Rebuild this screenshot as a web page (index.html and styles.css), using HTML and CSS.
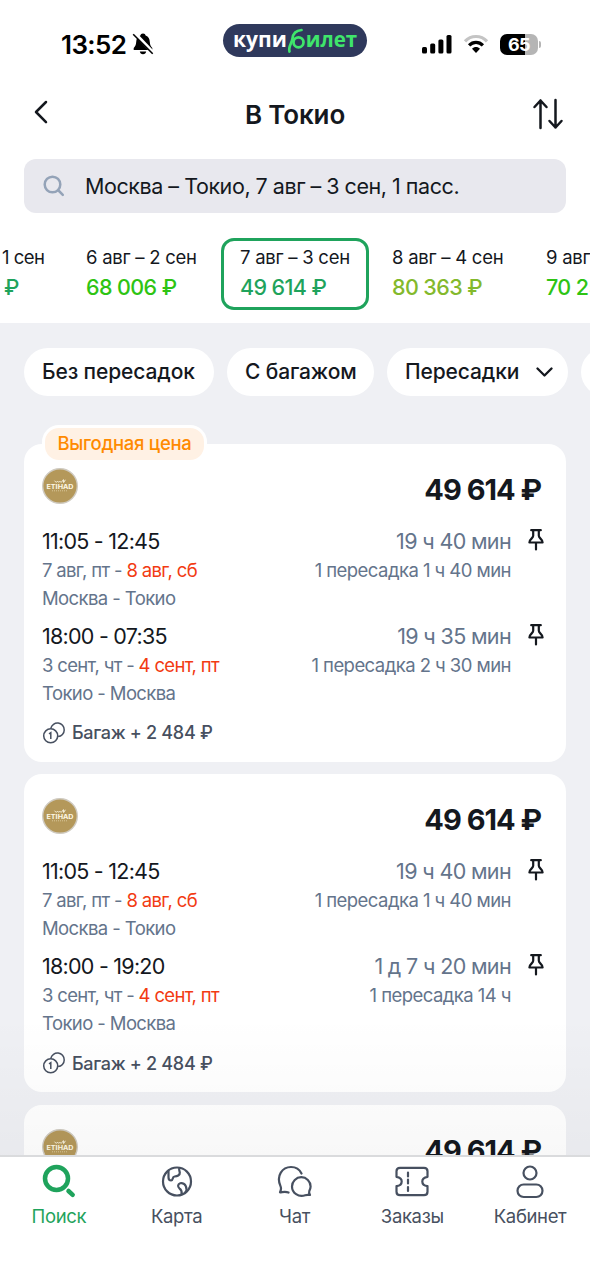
FILE: index.html
```html
<!DOCTYPE html>
<html lang="ru">
<head>
<meta charset="utf-8">
<title>В Токио</title>
<link rel="stylesheet" href="styles.css">
</head>
<body>
<svg class="defs" width="0" height="0">
  <symbol id="pin" viewBox="0 0 18 24"><path d="M4.200 2.200h9.600M6.200 2.500v5.300c0 2.600-3.800 3.200-3.800 6.700h13.200c0-3.500-3.800-4.100-3.800-6.700V2.500M9 14.500v7"/></symbol>
  <symbol id="coins" viewBox="0 0 24 24"><circle cx="8.700" cy="14.800" r="7"/><path d="M8.800 7.300a6.800 6.800 0 1 1 7.300 8.300M7 12.900l1.800-1.200v6.300"/></symbol>
  <symbol id="airline" viewBox="0 0 36 36"><circle cx="18" cy="18" r="17.300" fill="#b4985a" stroke="#cfcac0" stroke-width="1.400"/><path d="M12.500 12.700c1 1.600 2.200 2 3.200.6.500 1.200 1.500 1.200 2.200 0 .5 1.400 2 1 2.500-.2l1-1.500.2 3 1.800-2.800" fill="none" stroke="#f6efd9" stroke-width="1"/><text x="18" y="20.500" text-anchor="middle" textLength="27" lengthAdjust="spacingAndGlyphs">ETIHAD</text><path d="M10 22.800h16" stroke="#e0d2a8" stroke-width=".8" stroke-dasharray="1 1"/></symbol>
</svg>
<div class="app">
  <header class="top">
    <div class="status">
      <div class="clock"><span>13:52</span>
        <svg width="22" height="24" viewBox="0 0 22 24"><path d="M11 1.500c1.600 0 2.300.8 2.600 2 3 1.100 4 3.500 4.200 6.500.2 3.300 1 4.300 2.500 6v1.900H1.700V16c1.500-1.700 2.300-2.700 2.500-6 .2-3 1.200-5.400 4.200-6.500.3-1.200 1-2 2.600-2zM7.800 19.500h6.400c-.2 1.600-1.400 2.800-3.200 2.800s-3-1.200-3.200-2.800z"/><path d="M2.500 1l19 20" stroke="#fff" stroke-width="3.500"/><path d="M1.200 2.200l19.500 19.600" stroke="#000" stroke-width="1.600"/></svg>
      </div>
      <div class="brand"><span class="brand-a">купи</span><svg width="19" height="30" viewBox="0 0 19 30"><path d="M2.500 25.500C1 20.500 5 17 5.500 12.500C6 7.500 9 4.500 14.500 4"/><circle cx="11.500" cy="16.300" r="5"/></svg><span class="brand-b">илет</span></div>
      <div class="signals">
        <svg width="30" height="20" viewBox="0 0 30 20"><rect x="0" y="13" width="5" height="6.500" rx="1.500"/><rect x="8.200" y="9.500" width="5" height="10" rx="1.500"/><rect x="16.400" y="5.500" width="5" height="14" rx="1.500"/><rect x="24.500" y="1" width="5" height="18.500" rx="1.500"/></svg>
        <svg width="26" height="20" viewBox="0 0 26 20" fill="none" stroke-width="3.200"><path d="M2 7.300c6-6.400 16-6.400 22 0" stroke="#c4c4c4"/><path d="M6.100 11.300c4-4 9.800-4 13.800 0" stroke="#000"/><path d="M9 14.700c2.300-2.200 5.700-2.200 8 0L13 19z" fill="#000"/></svg>
        <div class="power"><div class="battery">65</div><i class="nub"></i></div>
      </div>
    </div>
    <div class="title">
      <svg class="back" width="16" height="26" viewBox="0 0 16 26"><path d="M13 3L3 13l10 10.200"/></svg>
      <h1>В Токио</h1>
      <svg width="32" height="32" viewBox="0 0 32 32"><path d="M8.500 30V2.500M2.500 9l6-6.500 6 6.500M23.500 2v27.500M17.500 23l6 6.500 6-6.500"/></svg>
    </div>
    <div class="search">
      <svg width="22" height="22" viewBox="0 0 22 22"><circle cx="9.500" cy="9.500" r="7.800"/><path d="M15.500 15.500l4.300 4.300"/></svg>
      <span>Москва – Токио, 7 авг – 3 сен, 1 пасс.</span>
    </div>
    <div class="dates">
      <div class="date first"><span>1 сен</span><b class="g1">₽</b></div>
      <div class="date"><span>6 авг – 2 сен</span><b class="g2">68 006 ₽</b></div>
      <div class="date selected"><span>7 авг – 3 сен</span><b class="g1">49 614 ₽</b></div>
      <div class="date"><span>8 авг – 4 сен</span><b class="g3">80 363 ₽</b></div>
      <div class="date last"><span>9 авг</span><b class="g2">70 25</b></div>
    </div>
  </header>
  <main class="results">
    <div class="chips">
      <div class="chip">Без пересадок</div>
      <div class="chip">С багажом</div>
      <div class="chip">Пересадки <svg width="17" height="11" viewBox="0 0 17 11"><path d="M1.500 1.500l7 7 7-7"/></svg></div>
      <div class="chip"></div>
    </div>
    <article class="card">
      <div class="badge">Выгодная цена</div>
      <div class="head"><svg class="logo"><use href="#airline"/></svg><div class="price">49 614 ₽</div></div>
      <div class="leg">
        <div class="time">11:05 - 12:45</div><div class="dur">19 ч 40 мин</div><svg class="pin"><use href="#pin"/></svg>
        <div class="day">7 авг, пт - <em>8 авг, сб</em></div><div class="stop">1 пересадка 1 ч 40 мин</div>
        <div class="route">Москва - Токио</div>
      </div>
      <div class="leg">
        <div class="time">18:00 - 07:35</div><div class="dur">19 ч 35 мин</div><svg class="pin"><use href="#pin"/></svg>
        <div class="day">3 сент, чт - <em>4 сент, пт</em></div><div class="stop">1 пересадка 2 ч 30 мин</div>
        <div class="route">Токио - Москва</div>
      </div>
      <div class="bag"><svg><use href="#coins"/></svg>Багаж + 2 484 ₽</div>
    </article>
    <article class="card">
      <div class="head"><svg class="logo"><use href="#airline"/></svg><div class="price">49 614 ₽</div></div>
      <div class="leg">
        <div class="time">11:05 - 12:45</div><div class="dur">19 ч 40 мин</div><svg class="pin"><use href="#pin"/></svg>
        <div class="day">7 авг, пт - <em>8 авг, сб</em></div><div class="stop">1 пересадка 1 ч 40 мин</div>
        <div class="route">Москва - Токио</div>
      </div>
      <div class="leg">
        <div class="time">18:00 - 19:20</div><div class="dur">1 д 7 ч 20 мин</div><svg class="pin"><use href="#pin"/></svg>
        <div class="day">3 сент, чт - <em>4 сент, пт</em></div><div class="stop">1 пересадка 14 ч</div>
        <div class="route">Токио - Москва</div>
      </div>
      <div class="bag"><svg><use href="#coins"/></svg>Багаж + 2 484 ₽</div>
    </article>
    <article class="card">
      <div class="head"><svg class="logo"><use href="#airline"/></svg><div class="price">49 614 ₽</div></div>
    </article>
  </main>
  <nav class="tabs">
    <div class="tab active"><svg viewBox="0 0 36 36"><circle cx="15.500" cy="15.500" r="11.500" stroke-width="4.500"/><path d="M27.500 28l4.200 3.800" stroke-width="4.500"/></svg>Поиск</div>
    <div class="tab"><svg viewBox="0 0 36 36"><circle cx="18" cy="18.500" r="14"/><path d="M9.500 7.700v6.500c0 2 1 3.300 2.600 3.300 2.500 0 .8-3.800 3.500-4 2.500-.2 5.500-1.200 5.200-4-.2-1.700-1-2.200-.5-4.500M26.200 29.500c1.500-1.600 1.600-4 .7-6.200-.8-2-3.200-3.800-5.700-3-2.400.8-2.800 3.500-.8 5 2.200 1.500 2.600 3.400 2.200 5.800"/></svg>Карта</div>
    <div class="tab"><svg viewBox="0 0 36 36"><path d="M12.500 29.500c-3-1.200-5.500-.4-8.500-.2 1-2 1.700-3.500.5-6.200C-.2 12.500 6.500 4 15 4c5 0 8.700 2.700 10.500 6.500"/><path d="M34 32c-1.500-.2-3.300-.3-4.800.2C22.500 34.500 16 30 16 23.500c0-5 4.200-9.300 9.300-9.300s9.300 4.200 9.300 9.300c0 1.800-.7 3.300-1.300 4.500-.5 1.200-.2 2.200.7 4z"/></svg>Чат</div>
    <div class="tab"><svg viewBox="0 0 36 36"><path d="M6 4.800h24c2.200 0 3.500 1.500 3.500 3.500v5.500c-3.500.5-5.200 2.200-5.200 4.700s1.700 4.200 5.200 4.700v5.500c0 2.200-1.500 3.500-3.500 3.500H6c-2.200 0-3.500-1.500-3.500-3.500v-5.500c3.500-.5 5.200-2.200 5.200-4.700s-1.700-4.200-5.200-4.700V8.300c0-2 1.500-3.500 3.500-3.500z"/><path d="M14 9.500v4M14 16.500v4M14 24v4"/></svg>Заказы</div>
    <div class="tab"><svg viewBox="0 0 36 36"><circle cx="18" cy="10" r="6.500"/><rect x="5.500" y="21.500" width="25" height="12.500" rx="6.200"/></svg>Кабинет</div>
  </nav>
</div>
</body>
</html>
```

FILE: styles.css
```css
* { box-sizing: border-box; }
body { margin: 0; font-family: Inter, "Liberation Sans", sans-serif; color: #14181e; background: #fff; }
.defs { display: block; position: absolute; }
svg { flex: none; }
.app { width: 590px; height: 1280px; display: flex; flex-direction: column; overflow: hidden; }
.top { height: 323px; background: #fff; }

.status { height: 80px; padding: 24px 48px 0 61px; display: grid; grid-template-columns: 162px 144px 1fr; }
.clock { display: flex; align-items: center; gap: 6px; height: 40px; font-size: 26px; font-weight: 600; letter-spacing: -.6px; color: #000; }
.brand { height: 33px; border-radius: 17px; background: #2f395c; display: flex; align-items: center; padding-left: 10px; font-family: "Open Sans", sans-serif; font-size: 21px; line-height: 30px; font-weight: 700; color: #fff; }
.brand span { height: 33px; }
.brand svg { fill: none; stroke: #3fe56b; stroke-width: 2.700; stroke-linecap: round; }
.brand-b { color: #3fe56b; font-size: 20.500px; }
.signals { display: flex; align-items: center; justify-content: flex-end; height: 40px; gap: 11px; }
.power { display: flex; align-items: center; gap: 1px; }
.battery { width: 38px; height: 21px; border-radius: 7px; background: linear-gradient(90deg, #000 65%, #b5b5b5 65%); color: #fff; font-size: 18px; font-weight: 700; letter-spacing: -.5px; line-height: 21px; text-align: center; }
.nub { width: 2px; height: 7px; border-radius: 0 2px 2px 0; background: #b5b5b5; margin-right: 1px; }

.title { height: 79px; padding: 0 26px 12px 33px; display: grid; grid-template-columns: 16px 1fr 32px; align-items: center; }
.title h1 { margin: 1px 0 0 9px; font-size: 26px; font-weight: 600; letter-spacing: -.15px; text-align: center; }
.title svg { fill: none; stroke: #14181e; stroke-width: 2.500; stroke-linecap: round; stroke-linejoin: round; }
.title .back { margin-bottom: 4px; }

.search { margin: 0 24px; height: 54px; border-radius: 12px; background: #e8e8ee; display: flex; align-items: center; padding: 0 0 1px 19px; gap: 20px; font-size: 21.500px; letter-spacing: -.42px; word-spacing: -.2px; white-space: nowrap; }
.search svg { fill: none; stroke: #94a3b8; stroke-width: 2.500; stroke-linecap: round; }

.dates { display: grid; grid-template-columns: 68px 153px 148px 153px 68px; margin-top: 25px; height: 72px; overflow: hidden; }
.date { padding: 5px 0 0 18px; font-size: 18.500px; line-height: 28px; letter-spacing: -.25px; white-space: nowrap; display: flex; flex-direction: column; }
.date b { font-size: 21.500px; line-height: 32px; font-weight: 500; letter-spacing: -.6px; }
.date.first { padding-left: 2px; letter-spacing: -.5px; }
.date.first b { padding-left: 2px; }
.date.last { padding-left: 24px; }
.date:nth-child(4) { padding-left: 23px; }
.selected { border: 3px solid #1fa35c; border-radius: 13px; padding: 2px 0 0 16px; }
.g1 { color: #1fa35c; }
.g2 { color: #2ec413; }
.g3 { color: #83b92c; }

.results { position: relative; flex: 1; min-height: 0; overflow: hidden; background: #eff0f4; padding: 25px 24px 0; }
.results::after { content: ""; position: absolute; left: 0; right: 0; bottom: 0; height: 140px; background: linear-gradient(rgba(0,0,0,0), rgba(0,0,0,.026)); }
.chips { display: grid; grid-template-columns: 190px 147px 181px 100px; gap: 13px; height: 48px; margin-bottom: 48px; }
.chip { border-radius: 24px; background: #fff; padding: 0 15px 2px 18px; display: flex; align-items: center; justify-content: space-between; font-size: 21px; font-weight: 500; letter-spacing: -.12px; white-space: nowrap; }
.chip svg { fill: none; stroke: #14181e; stroke-width: 2.300; stroke-linecap: round; stroke-linejoin: round; margin-top: 2px; }

.card { position: relative; height: 318px; border-radius: 18px; background: #fff; padding: 24px 18px 0; margin-bottom: 12.400px; }
.badge { position: absolute; left: 18px; top: -19px; height: 38px; width: 165px; border: 3px solid #fff; border-radius: 17px; background: #fff1e4; color: #ff8a00; font-size: 18.500px; font-weight: 500; letter-spacing: -.3px; line-height: 31px; text-align: center; white-space: nowrap; }
.head { display: flex; justify-content: space-between; height: 58px; padding-right: 7px; }
.logo { width: 36px; height: 36px; }
#airline text { font: 700 6px Inter, sans-serif; fill: #fff9e5; }
.price { font-size: 29px; font-weight: 700; line-height: 43px; letter-spacing: -1px; }
.leg { display: grid; grid-template-columns: 1fr auto 37px; grid-template-rows: 30px 28px 27.500px; margin-bottom: 9.100px; line-height: 28px; font-size: 18.500px; letter-spacing: -.6px; color: #64748b; white-space: nowrap; }
.time { font-size: 21.500px; line-height: 30px; letter-spacing: -.75px; color: #14181e; }
.dur { font-size: 21.500px; line-height: 30px; letter-spacing: -.65px; text-align: right; }
.stop { text-align: right; letter-spacing: -.55px; }
.day, .route { grid-column: 1; }
.day { letter-spacing: -.66px; }
.day em { font-style: normal; color: #f23a12; }
.pin { width: 18px; height: 24px; margin: 2px 0 0 16px; fill: none; stroke: #14181e; stroke-width: 2.200; stroke-linejoin: round; stroke-linecap: round; }
.bag { display: flex; align-items: center; gap: 6px; height: 28px; margin-top: 12.800px; font-size: 18px; font-weight: 500; letter-spacing: -.3px; color: #475060; }
.bag svg { width: 24px; height: 24px; fill: none; stroke: #475060; stroke-width: 1.500; }

.tabs { height: 125px; border-top: 2px solid #dadbdd; background: #fff; display: grid; grid-template-columns: repeat(5, 117.800px); padding-top: 6px; }
.tab { display: flex; flex-direction: column; align-items: center; font-size: 18.500px; line-height: 34px; letter-spacing: -.35px; color: #475060; }
.tab svg { width: 36px; height: 36px; fill: none; stroke: currentColor; stroke-width: 2.200; stroke-linecap: round; stroke-linejoin: round; margin-top: -.5px; }
.active { color: #1fa35c; }
```
